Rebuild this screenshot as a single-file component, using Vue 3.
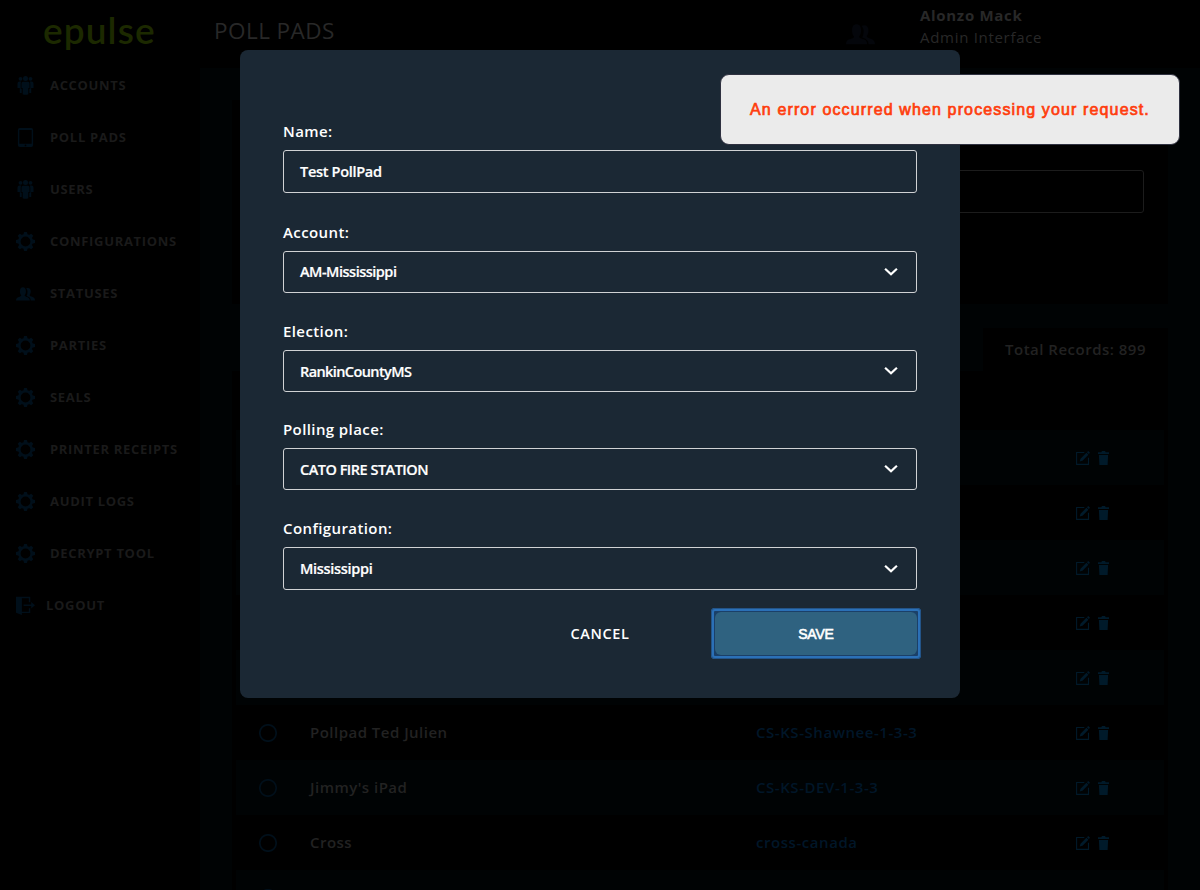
<script setup>
const nav = [
  { label: 'Accounts', icon: 'group' },
  { label: 'Poll Pads', icon: 'tablet' },
  { label: 'Users', icon: 'group' },
  { label: 'Configurations', icon: 'gear' },
  { label: 'Statuses', icon: 'people' },
  { label: 'Parties', icon: 'gear' },
  { label: 'Seals', icon: 'gear' },
  { label: 'Printer Receipts', icon: 'gear' },
  { label: 'Audit Logs', icon: 'gear' },
  { label: 'Decrypt Tool', icon: 'gear' },
  { label: 'Logout', icon: 'logout' },
]

const rows = [
  {}, {}, {}, {}, {},
  { name: 'Pollpad Ted Julien', config: 'CS-KS-Shawnee-1-3-3' },
  { name: "Jimmy's iPad", config: 'CS-KS-DEV-1-3-3' },
  { name: 'Cross', config: 'cross-canada' },
  {},
]

const fields = [
  { label: 'Name:', value: 'Test PollPad', select: false },
  { label: 'Account:', value: 'AM-Mississippi', select: true },
  { label: 'Election:', value: 'RankinCountyMS', select: true },
  { label: 'Polling place:', value: 'CATO FIRE STATION', select: true },
  { label: 'Configuration:', value: 'Mississippi', select: true },
]
</script>

<template>
  <div class="app">
    <svg class="defs" aria-hidden="true">
      <symbol id="i-people" viewBox="0 0 28 20">
        <path d="M0 19.5c0-3.800 2-4.500 5.500-5.600 1.500-.5 2.200-1 2.200-2C6.300 10.500 5.800 8.500 5.800 6 5.800 2 7.500 0 10.200 0s4.400 2 4.400 6c0 2.500-.6 4.500-1.900 5.900 0 1 .7 1.500 2.200 2 3.500 1.100 5.500 1.800 5.500 5.600z" />
        <path d="M15 1.900c.8-.6 1.700-.8 2.700-.8 2.600 0 4 1.900 4 5 0 2.300-.6 4-1.700 5.300 0 1.200.9 1.600 2.600 2.200 3 1 5.400 2 5.400 5.900h-6.200c-.2-3.700-2.300-5.300-6.200-6.500.8-1.700 1.400-3.900 1.400-6.500 0-1.800-.7-3.400-2-4.600z" />
      </symbol>
      <symbol id="i-group" viewBox="0 0 16 19">
        <circle cx="8" cy="2.500" r="2.500" />
        <circle cx="3" cy="2.800" r="1.900" />
        <circle cx="13" cy="2.800" r="1.900" />
        <path d="M5.500 5.800h5q1.500 0 1.500 1.500V12h-1.200v6.300q-2.800 1-5.600 0V12H4V7.300q0-1.500 1.500-1.500z" />
        <path d="M2 5.500h1.600Q3.200 6.500 3.200 8v4.700h1v4.300H2.300v-5H0V7.500q0-2 2-2zM14 5.500h-1.600q.4 1 .4 2.500v4.700h-1v4.300h1.900v-5H16V7.500q0-2-2-2z" />
      </symbol>
      <symbol id="i-tablet" viewBox="0 0 16 20">
        <path fill-rule="evenodd" d="M2 0h12a2 2 0 0 1 2 2v16a2 2 0 0 1-2 2H2a2 2 0 0 1-2-2V2a2 2 0 0 1 2-2zM1.500 2v14.500h13V2zM8 17.400a.9.900 0 1 0 0 1.800.9.900 0 0 0 0-1.800z" />
      </symbol>
      <symbol id="i-gear" viewBox="-10 -10 20 20">
        <circle r="6.500" fill="none" stroke="currentColor" stroke-width="2.600" />
        <g v-for="a in 8" :key="a" :transform="`rotate(${a * 45})`">
          <path d="M-2.300-6.900-1.500-10h3l.8 3.100z" />
        </g>
      </symbol>
      <symbol id="i-logout" viewBox="0 0 20 20">
        <path d="M0 .8h15v5.700h-1.500V2.300H6.200V16.500h7.300V13H15v5H6.200v2L0 17.600z" />
        <path d="M8 9h8V6.300L20 9.800 16 13.200v-2.700H8z" />
      </symbol>
      <symbol id="i-edit" viewBox="0 0 14 14">
        <path d="M8.300 1.500H.6v11.900h11.900V6.800" fill="none" stroke="currentColor" stroke-width="1.100" />
        <path d="M3.700 10.500l.8-2.800 5.900-5.900 2 2-5.900 5.900zM11 1.200 12.200 0l1.800 1.800L12.800 3z" />
      </symbol>
      <symbol id="i-trash" viewBox="0 0 11 14">
        <path d="M0 1.200h3.300L4 0h3l.7 1.200H11v1.900H0zM.9 4h9.200l-.5 10H1.400z" />
      </symbol>
    </svg>

    <aside class="sidebar">
      <div class="logo">epulse</div>
      <nav class="nav">
        <a v-for="n in nav" :key="n.label" class="nav-item">
          <svg :class="['nav-icon', n.icon]"><use :href="'#i-' + n.icon" /></svg>
          <span>{{ n.label }}</span>
        </a>
      </nav>
    </aside>

    <div class="content">
      <header class="header">
        <h1>POLL PADS</h1>
        <svg class="user-icon"><use href="#i-people" /></svg>
        <div class="user">
          <strong>Alonzo Mack</strong>
          <span>Admin Interface</span>
        </div>
      </header>
      <main class="main">
        <section class="filters"><div class="search"></div></section>
        <div class="total">Total Records: 899</div>
        <section class="table">
          <div v-for="(r, i) in rows" :key="i" class="row">
            <svg class="radio" viewBox="0 0 18 18"><circle cx="9" cy="9" r="8.200" /></svg>
            <span class="name">{{ r.name }}</span>
            <a class="config">{{ r.config }}</a>
            <svg class="edit"><use href="#i-edit" /></svg>
            <svg class="trash"><use href="#i-trash" /></svg>
          </div>
        </section>
      </main>
    </div>

    <form class="modal" @submit.prevent>
      <div v-for="f in fields" :key="f.label" class="field">
        <label>{{ f.label }}</label>
        <div class="box">
          <span>{{ f.value }}</span>
          <svg v-if="f.select" class="chevron" viewBox="0 0 14 10"><path d="M1.100 1.700 7 7.300l5.900-5.600" /></svg>
        </div>
      </div>
      <div class="actions">
        <button type="button" class="cancel">CANCEL</button>
        <div class="focus"><button type="submit" class="save">SAVE</button></div>
      </div>
    </form>

    <div class="toast" role="alert">An error occurred when processing your request.</div>
  </div>
</template>

<style>
body {
  margin: 0;
  background: #000;
  overflow: hidden;
}
</style>

<style scoped>
* {
  box-sizing: border-box;
}
.app {
  position: relative;
  display: flex;
  width: 1200px;
  height: 890px;
  overflow: hidden;
  background: #000;
  color: #222;
  font-family: "Open Sans", sans-serif;
}
.defs {
  position: absolute;
  width: 0;
  height: 0;
}
svg {
  fill: currentColor;
  flex: none;
}
.sidebar {
  flex: none;
  width: 200px;
}
.logo {
  height: 59px;
  padding-left: 43px;
  color: #1c2900;
  font: 600 37px/59px Lato, sans-serif;
  letter-spacing: 1.100px;
}
.nav-item {
  display: flex;
  align-items: center;
  height: 52px;
  padding-left: 16px;
  font-size: 13px;
  font-weight: 700;
  letter-spacing: 0.68px;
  text-transform: uppercase;
  color: #1a1a1a;
}
.nav-icon {
  width: 19px;
  height: 19px;
  margin: 1px 15px 0 0;
  color: #000f1a;
}
.nav-icon.people {
  height: 14px;
}
.nav-icon.logout {
  margin-right: 11px;
}
.content {
  flex: 1;
  display: flex;
  flex-direction: column;
}
.header {
  display: flex;
  align-items: flex-start;
  height: 68px;
  flex: none;
}
h1 {
  width: 646px;
  margin: 0;
  padding-left: 14px;
  font-size: 22.500px;
  font-weight: 400;
  line-height: 62px;
  letter-spacing: 0.45px;
  color: #282828;
}
.user-icon {
  width: 29px;
  height: 21px;
  margin-top: 24px;
  color: #04060b;
}
.user {
  display: flex;
  flex-direction: column;
  padding: 4px 0 0 45px;
  font-size: 15px;
  line-height: 22px;
  letter-spacing: 0.7px;
  color: #282828;
}
.user strong {
  font-weight: 700;
}
.main {
  flex: 1;
  display: flex;
  flex-direction: column;
  padding: 32px 32px 0;
  background: #000304;
}
.filters {
  flex: none;
  height: 204px;
  margin-bottom: 24px;
  padding: 70px 24px 0;
  background: #000;
}
.search {
  height: 43px;
  border: 1px solid #1c1c1c;
  border-radius: 3px;
}
.total {
  align-self: flex-end;
  flex: none;
  width: 185px;
  height: 43px;
  padding-left: 22px;
  background: #000;
  font-size: 15px;
  font-weight: 600;
  line-height: 43px;
  letter-spacing: 0.5px;
  white-space: nowrap;
}
.table {
  flex: 1;
  padding: 59px 4px 0;
  background: #000;
}
.row {
  display: flex;
  align-items: center;
  height: 55px;
  padding-left: 23px;
  font-size: 15px;
  font-weight: 600;
  letter-spacing: 0.48px;
}
.row:nth-child(odd) {
  background: #000304;
}
.radio {
  width: 18px;
  height: 18px;
  margin: 1px 33px 0 0;
  fill: none;
  stroke: #000f1a;
  stroke-width: 1.700;
}
.name,
.config {
  height: 22px;
  line-height: 20px;
}
.name {
  width: 446px;
}
.config {
  width: 320px;
  color: #001628;
  letter-spacing: 0.55px;
}
.edit {
  width: 14px;
  height: 14px;
  margin: 1px 8px 0 0;
  color: #001a2a;
}
.trash {
  width: 11px;
  height: 14px;
  margin-top: 1px;
  color: #001a2a;
}
.modal {
  position: absolute;
  left: 240px;
  top: 50px;
  width: 720px;
  height: 648px;
  padding: 70px 43px 0;
  border-radius: 8px;
  background: #1b2834;
  color: #fff;
}
.field {
  height: 99px;
}
.field:nth-child(1) {
  height: 101px;
}
.field:nth-child(3) {
  height: 98px;
}
.field:nth-child(5) {
  height: 91px;
}
label {
  display: block;
  height: 22px;
  margin-bottom: 8px;
  font-size: 15px;
  font-weight: 600;
  line-height: 22px;
  letter-spacing: 0.4px;
}
.box {
  display: flex;
  align-items: center;
  justify-content: space-between;
  height: 42px;
  padding: 0 18px 0 16px;
  border: 1px solid #d0d2d4;
  border-radius: 3px;
  font-size: 14.500px;
  font-weight: 600;
  letter-spacing: -0.5px;
  -webkit-text-stroke: 0.2px #fff;
}
.field:nth-child(1) .box,
.field:nth-child(5) .box {
  height: 43px;
  letter-spacing: -0.3px;
}
.field:nth-child(2) span {
  padding-bottom: 2px;
}
.field:nth-child(3) span {
  letter-spacing: -0.6px;
}
.chevron {
  width: 14px;
  height: 10px;
  fill: none;
  stroke: #fff;
  stroke-width: 2.200;
}
.actions {
  display: flex;
  align-items: center;
  justify-content: flex-end;
  width: 638px;
  height: 51px;
}
button {
  border: 0;
  padding: 0;
  color: #fff;
  background: none;
}
.cancel {
  width: 202px;
  height: 43px;
  margin-right: 10px;
  font: 600 14.500px "Open Sans", sans-serif;
  letter-spacing: 0.6px;
}
.focus {
  width: 210px;
  height: 51px;
  padding: 4px;
  border-radius: 4px;
  background: #1b4068;
  box-shadow: inset 0 0 0 1px #235488, inset 0 0 0 3px #2b70b7;
}
.save {
  width: 202px;
  height: 43px;
  border-radius: 6px;
  background: #2f6280;
  font: 400 14px "Liberation Sans", Arial, sans-serif;
  letter-spacing: -0.2px;
  -webkit-text-stroke: 0.6px #fff;
}
.toast {
  position: absolute;
  left: 720px;
  top: 74px;
  width: 460px;
  height: 71px;
  padding-left: 29px;
  border: 1px solid #2f3140;
  border-radius: 9px;
  background: #ebebeb;
  color: #ff3d0d;
  font: 400 16px/69px "Liberation Sans", Arial, sans-serif;
  -webkit-text-stroke: 0.7px #ff3d0d;
  letter-spacing: 1.130px;
  white-space: nowrap;
}
</style>
